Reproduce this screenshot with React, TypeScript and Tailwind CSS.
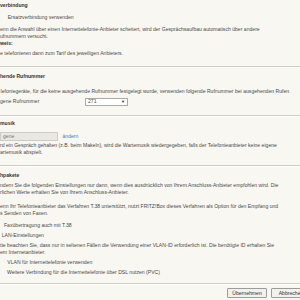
const sep = "mx-0 h-[2px] border-t border-t-[#cfcdc4] border-b border-b-white";

function Line({ className = "", children }: { className?: string; children: React.ReactNode }) {
  return <div className={`h-[7px] leading-[7px] whitespace-nowrap ${className}`}>{children}</div>;
}

export default function App() {
  return (
    <div
      className="relative w-[300px] h-[300px] overflow-hidden bg-[#f8f7f2] text-[#4a4a4a] text-[5.1px]"
      style={{ fontFamily: '"Liberation Sans", Arial, sans-serif' }}
    >
      {/* Ersatzverbindung */}
      <Line className="mt-[2px] font-bold text-[#333]">verbindung</Line>
      <Line className="mt-[5px] pl-[7.7px]">Ersatzverbindung verwenden</Line>
      <Line className="mt-[4.5px]">
        enn die Anwahl über einen Internettelefonie-Anbieter scheitert, wird der Gesprächsaufbau automatisch über andere
      </Line>
      <Line>ufnummern versucht.</Line>
      <Line className="font-bold text-[#333]">weis:</Line>
      <Line className="mt-[3px]">e telefonieren dann zum Tarif des jeweiligen Anbieters.</Line>
      <div className={`mt-[9.5px] ${sep}`} />

      {/* Ausgehende Rufnummer */}
      <Line className="mt-[4.5px] font-bold text-[#333]">hende Rufnummer</Line>
      <Line className="mt-[8px] pl-[0.5px]">
        lefoniegeräte, für die keine ausgehende Rufnummer festgelegt wurde, verwenden folgende Rufnummer bei ausgehenden Rufen
      </Line>
      <div className="mt-[3px] flex items-center h-[8.5px]">
        <span className="w-[85px] whitespace-nowrap">gene Rufnummer</span>
        <div className="flex items-center justify-between w-[43px] h-[8px] bg-white border border-[#a9a9a9] px-[2px]">
          <span>271</span>
          <span className="text-[4px] text-[#222]">▼</span>
        </div>
      </div>
      <div className={`mt-[8.5px] ${sep}`} />

      {/* Wartemusik */}
      <Line className="mt-[3px] font-bold text-[#333]">musik</Line>
      <div className="mt-[5.5px] flex items-center h-[9px]">
        <div className="w-[58px] h-[9px] bg-[#e9e8e3] border border-[#cdccc6] pl-[2px] leading-[7px] text-[#777]">gene</div>
        <span className="ml-[4.5px] text-[#4b76b6]">ändern</span>
      </div>
      <Line className="mt-[1px]">
        rd ein Gespräch gehalten (z.B. beim Makeln), wird die Wartemusik wiedergegeben, falls der Telefonieanbieter keine eigene
      </Line>
      <Line>artemusik abspielt.</Line>
      <div className={`mt-[8.5px] ${sep}`} />

      {/* Sprachpakete */}
      <Line className="mt-[5.5px] font-bold text-[#333]">hpakete</Line>
      <Line className="mt-[2.5px]">
        ndern Sie die folgenden Einstellungen nur dann, wenn dies ausdrücklich von Ihrem Anschluss-Anbieter empfohlen wird. Die
      </Line>
      <Line>rlichen Werte erhalten Sie von Ihrem Anschluss-Anbieter.</Line>
      <Line className="mt-[7.7px]">
        enn Ihr Telefonieanbieter das Verfahren T.38 unterstützt, nutzt FRITZ!Box dieses Verfahren als Option für den Empfang und
      </Line>
      <Line>s Senden von Faxen.</Line>
      <Line className="mt-[5.3px] pl-[4px]">Faxübertragung auch mit T.38</Line>
      <Line className="mt-[3px] pl-[1.7px]">LAN-Einstellungen</Line>
      <Line className="mt-[2.7px]">
        tte beachten Sie, dass nur in seltenen Fällen die Verwendung einer VLAN-ID erforderlich ist. Die benötigte ID erhalten Sie
      </Line>
      <Line>em Internetanbieter.</Line>
      <Line className="mt-[3px] pl-[7.3px]">VLAN für Internettelefonie verwenden</Line>
      <Line className="mt-[2.6px] pl-[7px]">Weitere Verbindung für die Internettelefonie über DSL nutzen (PVC)</Line>
      <div className={`mt-[7.5px] ${sep}`} />

      <div className="mt-[2.7px] flex gap-[4px] pl-[227px]">
        <button className="shrink-0 w-[40px] h-[10px] leading-[8px] bg-[#f1f1ee] border border-[#9c9c98] rounded-[1px] text-[#333]">
          Übernehmen
        </button>
        <button className="shrink-0 w-[40px] h-[10px] leading-[8px] bg-[#f1f1ee] border border-[#9c9c98] rounded-[1px] text-[#333]">
          Abbrechen
        </button>
      </div>
    </div>
  );
}
